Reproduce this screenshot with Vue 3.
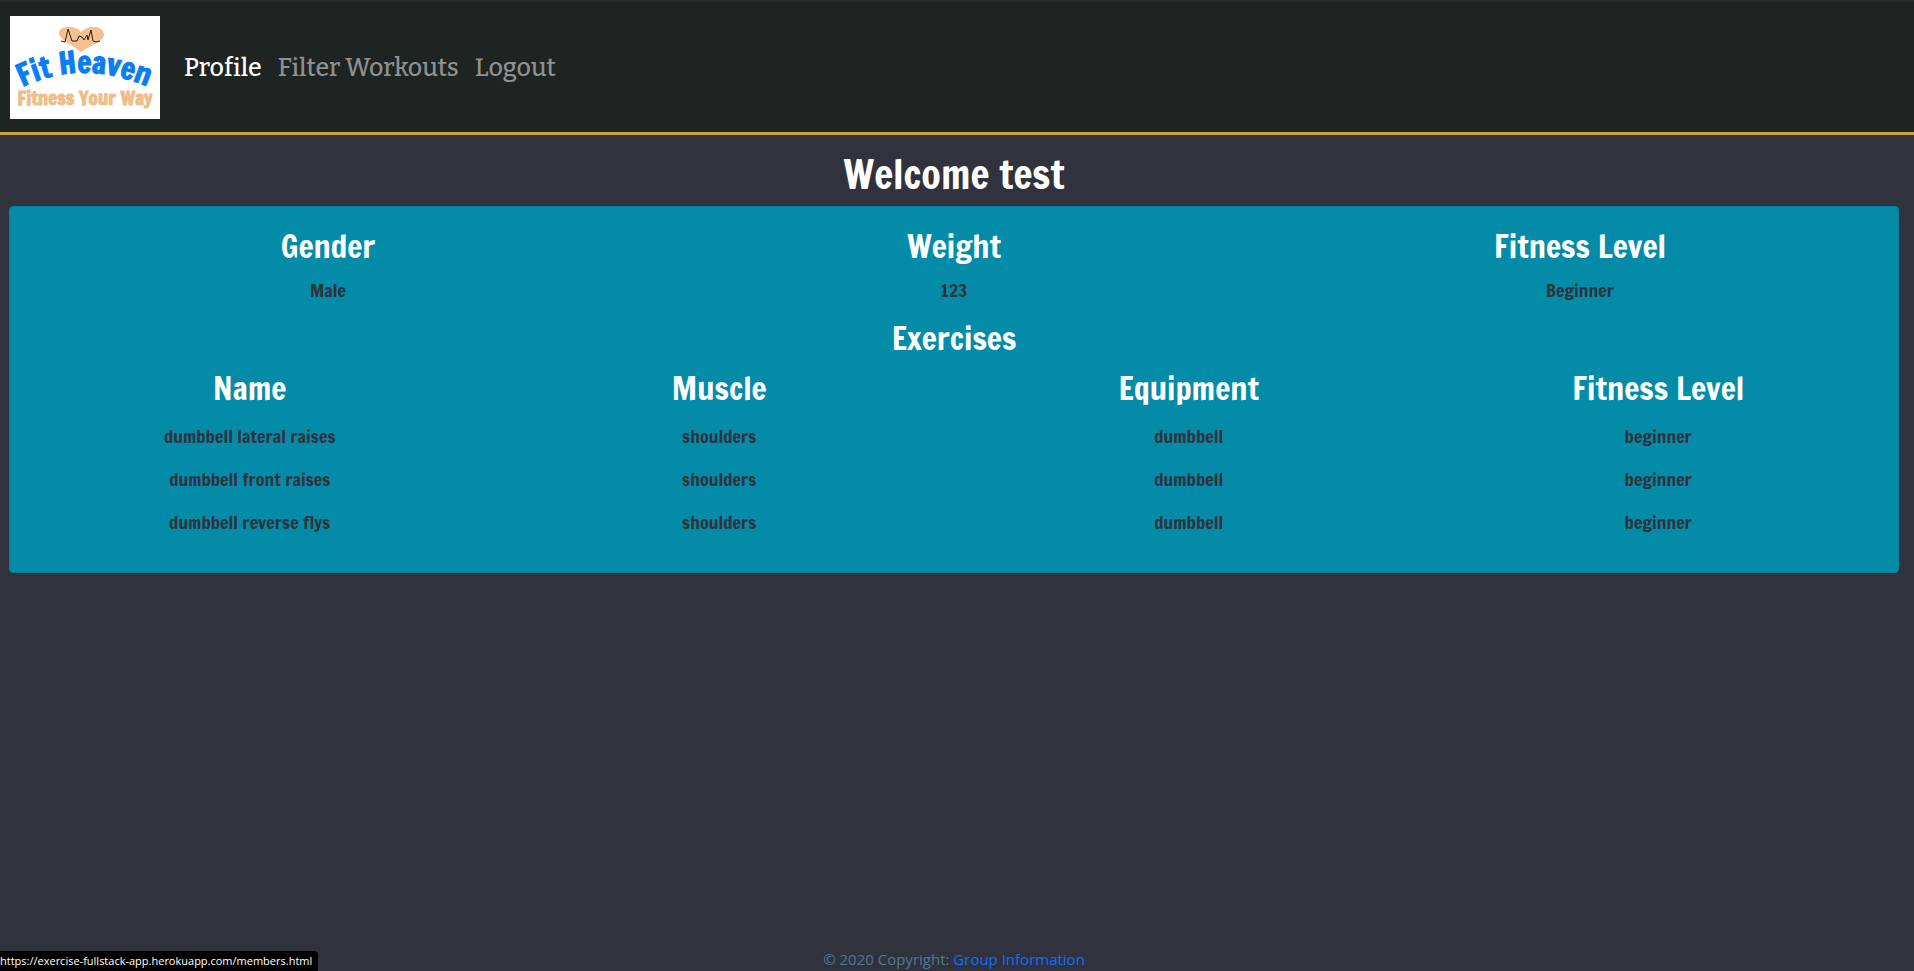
<script setup>
const links = [
  { label: 'Profile', active: true },
  { label: 'Filter Workouts', active: false },
  { label: 'Logout', active: false },
]

const stats = [
  { label: 'Gender', value: 'Male' },
  { label: 'Weight', value: '123' },
  { label: 'Fitness Level', value: 'Beginner' },
]

const columns = ['Name', 'Muscle', 'Equipment', 'Fitness Level']

const exercises = [
  ['dumbbell lateral raises', 'shoulders', 'dumbbell', 'beginner'],
  ['dumbbell front raises', 'shoulders', 'dumbbell', 'beginner'],
  ['dumbbell reverse flys', 'shoulders', 'dumbbell', 'beginner'],
]
</script>

<template>
  <div class="page">
    <header class="navbar">
      <a class="brand" href="#" aria-label="Fit Heaven home">
        <svg class="logo" viewBox="0 0 150 103" aria-hidden="true">
          <rect width="150" height="103" fill="#fff" />
          <path
            d="M71 36C64 30 49 24 49 17C49 12 54 11 59 11C65 11 69 13 71 16C74 13 78 11 84 11C90 11 94 14 94 19C93 26 79 30 71 36Z"
            fill="#f6c08f"
          />
          <path
            d="M51 25L55 26L58 13L62 25H67L69 20L72 21L74 24L77 19L78 24L81 14L83 25L86 26L90 25"
            fill="none"
            stroke="#2a2018"
            stroke-width="1"
            stroke-linejoin="round"
          />
          <path id="logo-arc" d="M9 73Q70 41 141 72" fill="none" />
          <text class="logo-name">
            <textPath href="#logo-arc" startOffset="50%">Fit Heaven</textPath>
          </text>
          <text class="logo-tag" x="75" y="89">Fitness Your Way</text>
        </svg>
      </a>
      <nav class="links">
        <a
          v-for="link in links"
          :key="link.label"
          href="#"
          class="link"
          :class="{ active: link.active }"
        >{{ link.label }}</a>
      </nav>
    </header>

    <main class="content">
      <h1 class="title">Welcome test</h1>
      <section class="card">
        <div class="stats">
          <div v-for="stat in stats" :key="stat.label">
            <h2 class="heading">{{ stat.label }}</h2>
            <p class="value">{{ stat.value }}</p>
          </div>
        </div>
        <h2 id="exercises" class="heading exercises">Exercises</h2>
        <table class="table" aria-labelledby="exercises">
          <thead>
            <tr>
              <th v-for="column in columns" :key="column" class="heading" scope="col">{{ column }}</th>
            </tr>
          </thead>
          <tbody>
            <tr v-for="row in exercises" :key="row[0]">
              <td v-for="(cell, i) in row" :key="i">{{ cell }}</td>
            </tr>
          </tbody>
        </table>
      </section>
    </main>

    <footer class="footer">© 2020 Copyright: <a href="#">Group Information</a></footer>
    <div class="status">https://exercise-fullstack-app.herokuapp.com/members.html</div>
  </div>
</template>

<style>
body {
  margin: 0;
  background: #30323d;
}
</style>

<style scoped>
.page {
  display: flex;
  flex-direction: column;
  min-height: 100vh;
  box-sizing: border-box;
  background: #30323d;
  font-family: "Francois One", Roboto, sans-serif;
}
.navbar {
  display: flex;
  align-items: center;
  gap: 24px;
  padding: 14px 10px 13px;
  border-top: 2px solid #2b2b2b;
  border-bottom: 3px solid #d19e3f;
  background: #1e2422;
}
.brand,
.logo {
  display: block;
}
.logo {
  width: 150px;
  height: 103px;
}
.logo-name {
  fill: #0a7cf5;
  stroke: #0a7cf5;
  stroke-width: 1px;
  font-size: 30px;
  text-anchor: middle;
}
.logo-tag {
  fill: #f0bd88;
  stroke: #f0bd88;
  stroke-width: 1px;
  font-size: 19px;
  text-anchor: middle;
}
.links {
  display: flex;
  gap: 16px;
}
.link {
  color: #8e9190;
  font-family: Bitter, "DejaVu Serif Condensed", "DejaVu Serif", serif;
  font-size: 25px;
  font-weight: 500;
  line-height: 36px;
  text-decoration: none;
}
.link.active {
  color: #fff;
}
.content {
  flex: 1;
  padding: 15px 15px 0 9px;
  text-align: center;
}
.title {
  margin: 0 0 8px;
  color: #fff;
  font-size: 40px;
  font-weight: 500;
  line-height: 48px;
}
.card {
  padding: 19px 5px 29px;
  border: 1px solid #077e97;
  border-radius: 4px;
  background: #048ba8;
}
.stats {
  display: grid;
  grid-template-columns: repeat(3, 1fr);
}
.heading {
  margin: 0;
  padding: 0;
  color: #fff;
  font-size: 32px;
  font-weight: 500;
  line-height: 40px;
}
.value {
  margin: 10px 0 14px;
  color: #30323d;
  font-size: 18px;
  line-height: 28px;
}
.exercises {
  margin-bottom: 10px;
}
.table {
  width: 100%;
  table-layout: fixed;
  border-collapse: collapse;
}
.table tbody::before {
  content: "";
  display: block;
  height: 6px;
}
.table td {
  height: 43px;
  padding: 0;
  color: #30323d;
  font-size: 18px;
}
.footer {
  padding: 0 6px 2px 0;
  color: #4c7a94;
  font-family: "Segoe UI", "Open Sans", sans-serif;
  font-size: 15px;
  line-height: 20px;
  text-align: center;
}
.footer a {
  color: #0f6fff;
  text-decoration: none;
}
.status {
  position: fixed;
  bottom: 0;
  left: 0;
  padding-right: 6px;
  border-top-right-radius: 4px;
  background: #000;
  color: #fff;
  font-family: "Segoe UI", "Open Sans", sans-serif;
  font-size: 11px;
  line-height: 20px;
}
</style>
